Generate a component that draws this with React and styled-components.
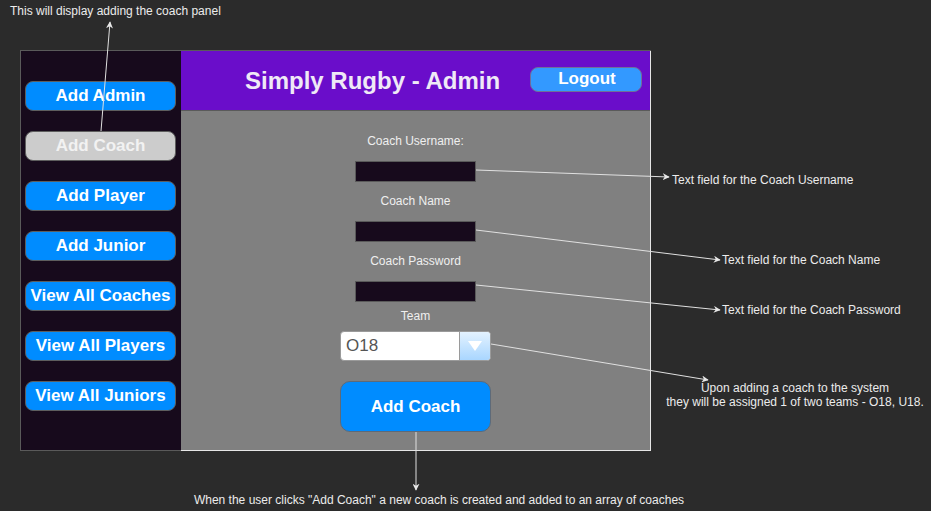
import styled, { createGlobalStyle } from 'styled-components'

const GlobalStyle = createGlobalStyle`
    body {
        margin: 0;
        background: #2b2b2b;
        font-family: "Liberation Sans", Arial, sans-serif;
    }
`

const Page = styled.div`
    position: relative;
    width: 931px;
    height: 511px;
    box-sizing: border-box;
    padding: 50px 0 0 20px;
    overflow: hidden;
`

const Frame = styled.div`
    display: flex;
    width: 631px;
    height: 401px;
    box-sizing: border-box;
    border-top: 1px solid #5a5a5a;
    border-left: 1px solid #5a5a5a;
`

const Sidebar = styled.div`
    width: 160px;
    height: 400px;
    box-sizing: border-box;
    background: #170a1c;
    border-bottom: 1px solid #5a5a5a;
    display: flex;
    flex-direction: column;
    gap: 20px;
    padding: 30px 0 0 4px;
`

const SideButton = styled.button`
    width: 151px;
    height: 30px;
    box-sizing: border-box;
    border: 1px solid #5e5e5e;
    border-radius: 8px;
    background: ${p => (p.$active ? '#cccccc' : '#008cff')};
    color: ${p => (p.$active ? '#f2f2f2' : '#ffffff')};
    font-family: "Liberation Sans", Arial, sans-serif;
    font-size: 17px;
    font-weight: bold;
    padding: 0;
    white-space: nowrap;
`

const Main = styled.div`
    width: 470px;
    height: 400px;
    box-sizing: border-box;
    border-right: 1px solid #e6e6e6;
    border-bottom: 1px solid #e6e6e6;
    background: #808080;
    display: flex;
    flex-direction: column;
`

const Header = styled.div`
    height: 60px;
    box-sizing: border-box;
    background: #6a0dca;
    border-bottom: 1px solid #5a5a5a;
    display: flex;
    align-items: center;
    padding: 0 8px 0 64px;
`

const Title = styled.h1`
    margin: 0;
    font-size: 24px;
    font-weight: bold;
    color: #efe9f6;
`

const LogoutButton = styled.button`
    margin-left: auto;
    margin-top: -3px;
    width: 112px;
    height: 25px;
    box-sizing: border-box;
    border: 1px solid #6f6f9a;
    border-radius: 8px;
    background: #3399ff;
    color: #ffffff;
    font-family: "Liberation Sans", Arial, sans-serif;
    font-size: 17px;
    font-weight: bold;
    padding: 0 0 0 2px;
`

const Form = styled.div`
    display: flex;
    flex-direction: column;
    align-items: center;
    padding-top: 23px;
`

const FieldLabel = styled.label`
    font-size: 12px;
    line-height: 14px;
    color: #efefef;
    margin-bottom: ${p => p.$gap || 13}px;
`

const TextField = styled.input`
    width: 121px;
    height: 21px;
    box-sizing: border-box;
    background: #170a1c;
    border: 1px solid #5a5a5a;
    margin: 0 0 ${p => p.$gap || 12}px;
    padding: 0;
`

const Select = styled.div`
    display: flex;
    width: 151px;
    height: 30px;
    box-sizing: border-box;
    border: 1px solid #9a9a9a;
    border-radius: 4px;
    background: #ffffff;
    overflow: hidden;
    margin-bottom: 20px;
`

const SelectValue = styled.span`
    flex: 1;
    padding-left: 5px;
    font-size: 17px;
    line-height: 28px;
    color: #555555;
`

const SelectArrow = styled.span`
    width: 30px;
    border-left: 1px solid #9a9a9a;
    background: linear-gradient(#e3f2ff, #a9d6ff);
    display: flex;
    align-items: center;
    justify-content: center;
`

const SubmitButton = styled.button`
    width: 151px;
    height: 51px;
    box-sizing: border-box;
    border: 1px solid #5e6a78;
    border-radius: 10px;
    background: #008cff;
    color: #ffffff;
    font-family: "Liberation Sans", Arial, sans-serif;
    font-size: 17px;
    font-weight: bold;
    padding: 0;
`

const Overlay = styled.svg`
    position: absolute;
    left: 0;
    top: 0;
    pointer-events: none;
`

const Note = styled.div`
    position: absolute;
    left: ${p => p.$x}px;
    top: ${p => p.$y}px;
    font-size: 12px;
    line-height: 14px;
    color: #ececec;
    white-space: nowrap;
    text-align: ${p => p.$center ? 'center' : 'left'};
    transform: ${p => p.$center ? 'translateX(-50%)' : 'none'};
`

const sideItems = ['Add Admin', 'Add Coach', 'Add Player', 'Add Junior', 'View All Coaches', 'View All Players', 'View All Juniors']

const arrows = [
    [101, 131, 110, 22],
    [476, 170, 669, 177],
    [476, 230, 720, 260],
    [476, 285, 720, 310],
    [491, 344, 708, 380],
    [416, 432, 416, 490],
]

const App = () => {
  return (
    <Page>
        <GlobalStyle/>
        <Frame>
            <Sidebar>
                {sideItems.map(item => (
                    <SideButton key={item} $active={item === 'Add Coach'}>{item}</SideButton>
                ))}
            </Sidebar>
            <Main>
                <Header>
                    <Title>Simply Rugby - Admin</Title>
                    <LogoutButton>Logout</LogoutButton>
                </Header>
                <Form>
                    <FieldLabel>Coach Username:</FieldLabel>
                    <TextField/>
                    <FieldLabel>Coach Name</FieldLabel>
                    <TextField/>
                    <FieldLabel>Coach Password</FieldLabel>
                    <TextField $gap={7}/>
                    <FieldLabel $gap={8}>Team</FieldLabel>
                    <Select>
                        <SelectValue>O18</SelectValue>
                        <SelectArrow>
                            <svg width="14" height="10" viewBox="0 0 14 10"><path d="M0 0 H14 L7 10 Z" fill="#ffffff"/></svg>
                        </SelectArrow>
                    </Select>
                    <SubmitButton>Add Coach</SubmitButton>
                </Form>
            </Main>
        </Frame>

        <Overlay width="931" height="511">
            <defs>
                <marker id="head" viewBox="0 0 10 10" refX="9" refY="5" markerWidth="7" markerHeight="7" orient="auto">
                    <path d="M0 0 L10 5 L0 10 L3 5 Z" fill="#e8e8e8"/>
                </marker>
            </defs>
            {arrows.map(([x1, y1, x2, y2], i) => (
                <line key={i} x1={x1} y1={y1} x2={x2} y2={y2} stroke="#e0e0e0" strokeWidth="1" markerEnd="url(#head)"/>
            ))}
        </Overlay>

        <Note $x={10} $y={4}>This will display adding the coach panel</Note>
        <Note $x={672} $y={173}>Text field for the Coach Username</Note>
        <Note $x={722} $y={253}>Text field for the Coach Name</Note>
        <Note $x={722} $y={303}>Text field for the Coach Password</Note>
        <Note $x={795} $y={381} $center>Upon adding a coach to the system<br/>they will be assigned 1 of two teams - O18, U18.</Note>
        <Note $x={439} $y={493} $center>When the user clicks "Add Coach" a new coach is created and added to an array of coaches</Note>
    </Page>
  )
}

export default App
